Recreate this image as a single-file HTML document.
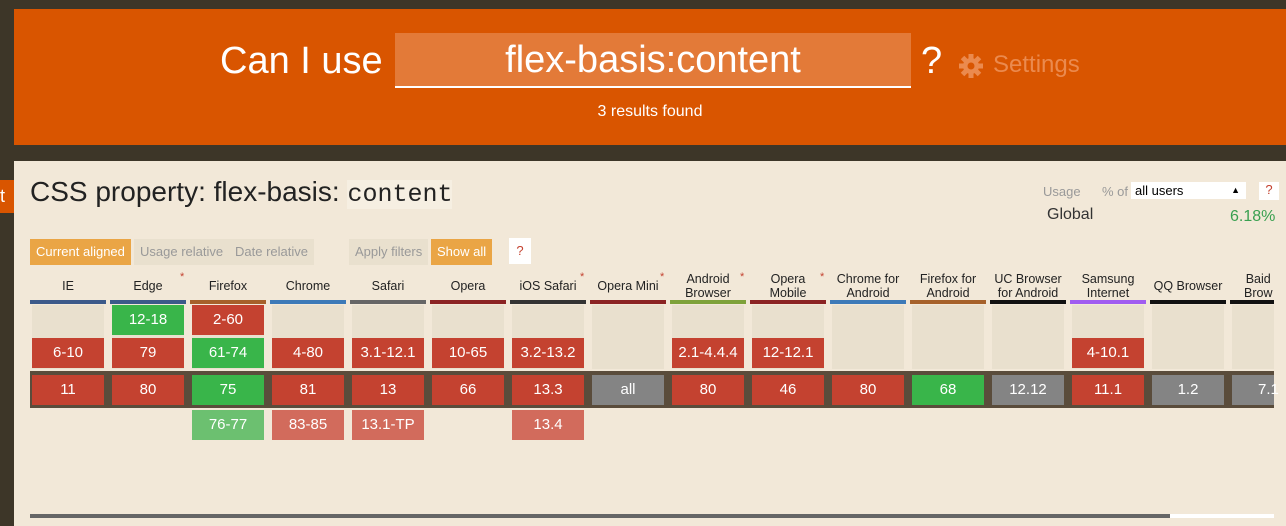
<!DOCTYPE html>
<html><head><meta charset="utf-8"><style>
*{margin:0;padding:0;box-sizing:border-box}
body{width:1286px;height:526px;overflow:hidden;background:#3d3628;font-family:"Liberation Sans",sans-serif;position:relative}
.a{position:absolute}
#hdr{left:14px;top:9px;width:1272px;height:136px;background:#d95500}
#panel{left:14px;top:161px;width:1272px;height:365px;background:#f2e8d8}
.c{position:absolute;width:72px;height:30px;color:#fff;font-size:15px;text-align:center;line-height:30px}
.r{background:#c44230}.g{background:#39b54a}.y{background:#848484}.lr{background:#d26b5c}.lg{background:#6cc070}
.h{position:absolute;width:76px;top:272px;height:28px;font-size:12.5px;color:#222;text-align:center;line-height:14px;display:flex;align-items:center;justify-content:center}
.bar{position:absolute;width:76px;top:300px;height:4px}
.t{position:absolute;top:305px;width:72px;height:64px;background:#e9e0ce}
.st{position:absolute;color:#c44230;font-size:11px;top:271px}
.btn{position:absolute;top:239px;height:26px;line-height:26px;font-size:13px;padding:0 6px}
</style></head><body>
<div class="a" id="hdr"></div>
<div class="a" style="left:220px;top:40px;font-size:38px;color:#fff">Can I use</div>
<div class="a" style="left:395px;top:33px;width:516px;height:55px;background:#e37a38;border-bottom:2px solid #fff;color:#fff;font-size:38px;text-align:center;line-height:55px">flex-basis:content</div>
<div class="a" style="left:921px;top:40px;font-size:38px;color:#fff">?</div>
<svg class="a" style="left:958px;top:53px" width="26" height="26" viewBox="0 0 26 26"><g fill="#eb8a4e"><circle cx="13" cy="13" r="8"/><rect x="10.5" y="1" width="5" height="24"/><rect x="1" y="10.5" width="24" height="5"/><rect x="10.5" y="1" width="5" height="24" transform="rotate(45 13 13)"/><rect x="10.5" y="1" width="5" height="24" transform="rotate(-45 13 13)"/></g><circle cx="13" cy="13" r="3.5" fill="#d95500"/></svg>
<div class="a" style="left:993px;top:51px;font-size:24px;color:#eb8a4e">Settings</div>
<div class="a" style="left:0;top:103px;width:1300px;text-align:center;font-size:16px;color:#fff">3 results found</div>
<div class="a" id="panel"></div>
<div class="a" style="left:0;top:180px;width:14px;height:33px;background:#d95500;color:#fff;font-size:18px;line-height:33px">t</div>
<div class="a" style="left:30px;top:176px;font-size:28px;color:#222">CSS property: flex-basis: <span style="font-family:'Liberation Mono',monospace;background:#f6efe2;font-size:25px">content</span></div>
<div class="a" style="left:1043px;top:184px;font-size:13px;color:#999">Usage</div>
<div class="a" style="left:1102px;top:184px;font-size:13px;color:#999">% of</div>
<div class="a" style="left:1131px;top:182px;width:115px;height:17px;background:#fff;font-size:13px;padding-left:4px;line-height:17px">all users<span style="position:absolute;right:6px;font-size:9px">&#9650;</span></div>
<div class="a" style="left:1259px;top:182px;width:20px;height:18px;background:#fff;color:#c44230;font-size:13px;text-align:center">?</div>
<div class="a" style="left:1047px;top:206px;font-size:16px;color:#333">Global</div>
<div class="a" style="left:1230px;top:208px;font-size:16px;color:#39a050">6.18%</div>
<div class="btn" style="left:30px;background:#eaa545;color:#fff">Current aligned</div>
<div class="btn" style="left:134px;background:#e9e0ce;color:#999">Usage relative</div>
<div class="btn" style="left:229px;background:#e9e0ce;color:#999">Date relative</div>
<div class="btn" style="left:349px;background:#e9e0ce;color:#999">Apply filters</div>
<div class="btn" style="left:431px;background:#eaa545;color:#fff">Show all</div>
<div class="btn" style="left:509px;top:238px;width:22px;background:#fff;color:#c44230;padding:0;text-align:center">?</div>
<div class="a" style="left:30px;top:371px;width:1244px;height:37px;background:#5a4c3b"></div>
<div class="a" style="left:30px;top:514px;width:1140px;height:4px;background:#666"></div>
<div class="a" style="left:1170px;top:514px;width:104px;height:4px;background:#fff"></div>

<div class="h" style="left:30px">IE</div><div class="bar" style="left:30px;background:#3c5a8a"></div><div class="t" style="left:32px"></div>
<div class="h" style="left:110px">Edge</div><div class="bar" style="left:110px;background:#3c5a8a"></div><div class="t" style="left:112px"></div><div class="st" style="left:180px">*</div>
<div class="h" style="left:190px">Firefox</div><div class="bar" style="left:190px;background:#a6612a"></div><div class="t" style="left:192px"></div>
<div class="h" style="left:270px">Chrome</div><div class="bar" style="left:270px;background:#3d7ab8"></div><div class="t" style="left:272px"></div>
<div class="h" style="left:350px">Safari</div><div class="bar" style="left:350px;background:#666"></div><div class="t" style="left:352px"></div>
<div class="h" style="left:430px">Opera</div><div class="bar" style="left:430px;background:#8b2323"></div><div class="t" style="left:432px"></div>
<div class="h" style="left:510px">iOS Safari</div><div class="bar" style="left:510px;background:#333"></div><div class="t" style="left:512px"></div><div class="st" style="left:580px">*</div>
<div class="h" style="left:590px">Opera Mini</div><div class="bar" style="left:590px;background:#8b2323"></div><div class="t" style="left:592px"></div><div class="st" style="left:660px">*</div>
<div class="h" style="left:670px">Android<br>Browser</div><div class="bar" style="left:670px;background:#7ea23a"></div><div class="t" style="left:672px"></div><div class="st" style="left:740px">*</div>
<div class="h" style="left:750px">Opera<br>Mobile</div><div class="bar" style="left:750px;background:#8b2323"></div><div class="t" style="left:752px"></div><div class="st" style="left:820px">*</div>
<div class="h" style="left:830px">Chrome for<br>Android</div><div class="bar" style="left:830px;background:#3d7ab8"></div><div class="t" style="left:832px"></div>
<div class="h" style="left:910px">Firefox for<br>Android</div><div class="bar" style="left:910px;background:#a6612a"></div><div class="t" style="left:912px"></div>
<div class="h" style="left:990px">UC Browser<br>for Android</div><div class="bar" style="left:990px;background:#111"></div><div class="t" style="left:992px"></div>
<div class="h" style="left:1070px">Samsung<br>Internet</div><div class="bar" style="left:1070px;background:#a05cf0"></div><div class="t" style="left:1072px"></div>
<div class="h" style="left:1150px">QQ Browser</div><div class="bar" style="left:1150px;background:#111"></div><div class="t" style="left:1152px"></div>
<div class="h" style="left:1230px;width:44px;overflow:hidden;justify-content:flex-start;padding-left:14px">Baid<br>Brow</div><div class="bar" style="left:1230px;width:44px;background:#111"></div><div class="t" style="left:1232px;width:42px"></div>

<div class="c g" style="left:112px;top:305px">12-18</div>
<div class="c r" style="left:192px;top:305px">2-60</div>
<div class="c r" style="left:32px;top:338px">6-10</div>
<div class="c r" style="left:112px;top:338px">79</div>
<div class="c g" style="left:192px;top:338px">61-74</div>
<div class="c r" style="left:272px;top:338px">4-80</div>
<div class="c r" style="left:352px;top:338px">3.1-12.1</div>
<div class="c r" style="left:432px;top:338px">10-65</div>
<div class="c r" style="left:512px;top:338px">3.2-13.2</div>
<div class="c r" style="left:672px;top:338px">2.1-4.4.4</div>
<div class="c r" style="left:752px;top:338px">12-12.1</div>
<div class="c r" style="left:1072px;top:338px">4-10.1</div>

<div class="c r" style="left:32px;top:375px">11</div>
<div class="c r" style="left:112px;top:375px">80</div>
<div class="c g" style="left:192px;top:375px">75</div>
<div class="c r" style="left:272px;top:375px">81</div>
<div class="c r" style="left:352px;top:375px">13</div>
<div class="c r" style="left:432px;top:375px">66</div>
<div class="c r" style="left:512px;top:375px">13.3</div>
<div class="c y" style="left:592px;top:375px">all</div>
<div class="c r" style="left:672px;top:375px">80</div>
<div class="c r" style="left:752px;top:375px">46</div>
<div class="c r" style="left:832px;top:375px">80</div>
<div class="c g" style="left:912px;top:375px">68</div>
<div class="c y" style="left:992px;top:375px">12.12</div>
<div class="c r" style="left:1072px;top:375px">11.1</div>
<div class="c y" style="left:1152px;top:375px">1.2</div>
<div class="c y" style="left:1232px;top:375px;width:42px;text-align:left;padding-left:26px">7.1</div>

<div class="c lg" style="left:192px;top:410px">76-77</div>
<div class="c lr" style="left:272px;top:410px">83-85</div>
<div class="c lr" style="left:352px;top:410px">13.1-TP</div>
<div class="c lr" style="left:512px;top:410px">13.4</div>
</body></html>
